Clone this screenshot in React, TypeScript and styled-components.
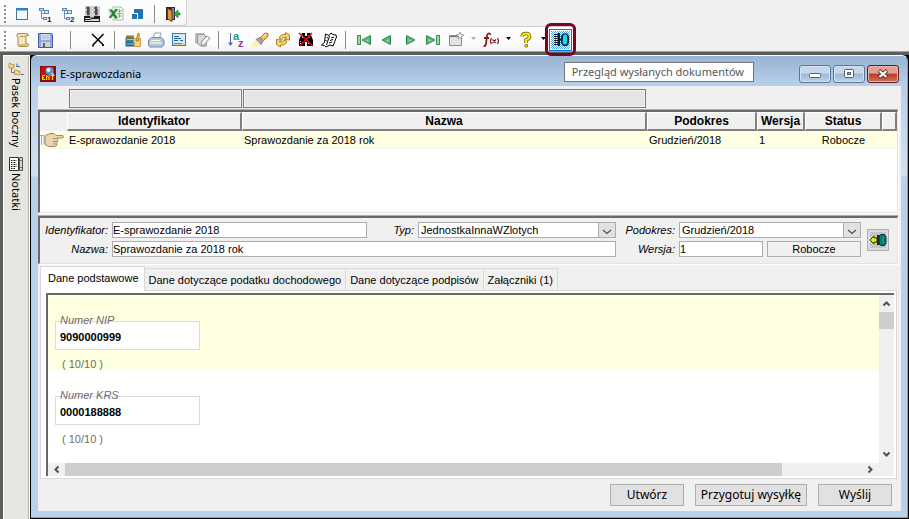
import React from "react";
import styled, { createGlobalStyle } from "styled-components";

const arial = `"Liberation Sans", Arial, sans-serif`;
const ui = `"Noto Sans", "Open Sans", sans-serif`;

const Global = createGlobalStyle`
  *, *::before, *::after { box-sizing: border-box; }
  html, body { margin: 0; height: 100%; }
  body { background: #f0f0f0; font: 11px/14px ${arial}; color: #000; overflow: hidden; }
  button, input, select { font: inherit; color: inherit; margin: 0; border-radius: 0; outline: none; }
  svg { overflow: visible; }
`;

const Page = styled.div`
  display: flex;
  flex-direction: column;
  height: 100vh;
`;

const Toolbar = styled.div`
  display: flex;
  align-items: center;
  align-self: flex-start;
  height: 26px;
  padding: 2px 2px 0 4px;
  background: linear-gradient(#fdfdfd, #fcfcfc 60%, #f3f3f3);
  border: solid #d0d0d0;
  border-width: 0 1px 1px 0;
  border-radius: 0 0 3px 0;
`;

const ToolbarWide = styled(Toolbar)`
  border-width: 1px 0 0 0;
  padding-top: 0;
  padding-right: 1px;
`;

const Grip = styled.span`
  width: 2px;
  height: 18px;
  margin-right: 5px;
  background: repeating-linear-gradient(#8c8c8c 0 2px, transparent 2px 4px);
`;

const ToolButton = styled.button`
  display: grid;
  place-items: center;
  width: 23px;
  height: 22px;
  padding: 0;
  border: 0;
  background: none;
`;

const DropButton = styled(ToolButton)`
  width: 12px;
`;

const Divider = styled.span<{ $wide?: boolean }>`
  width: 1px;
  height: 18px;
  margin: 0 ${(p) => (p.$wide ? "15px 0 13px" : "6px 0 5px")};
  background: #8a8a8a;
`;

const Highlight = styled.span`
  position: relative;
  display: flex;
  &::after {
    content: "";
    position: absolute;
    inset: -6px -4px -5px -4px;
    border: 3px solid #7d0420;
    border-radius: 6px;
    z-index: 3;
  }
`;

const ActiveTool = styled(ToolButton)`
  border: 1px solid #0078d7;
  background: repeating-conic-gradient(#ffffff 0 25%, #4fa4e8 0 50%) 0 0 / 2px 2px;
  box-shadow: inset 0 0 0 1px #f4faff;
`;

const Workspace = styled.div`
  display: flex;
  flex: 1;
  min-height: 0;
  border: solid #5d5d5d;
  border-width: 3px 0 0 3px;
  box-shadow: 0 -1px #a0a0a0;
  background: #000;
`;

const SideBar = styled.nav`
  display: flex;
  flex-direction: column;
  gap: 10px;
  width: 27px;
  padding: 6px 4px;
  background: #e6e5df;
  border: solid #fff;
  border-width: 1px 1px 0 1px;
  box-shadow: inset -1px 0 #b5b4ae;
`;

const SideButton = styled.button`
  display: flex;
  flex-direction: column;
  align-items: center;
  gap: 2px;
  width: 16px;
  padding: 0;
  border: 0;
  background: none;
  font: 11px/16px ${ui};
`;

const SideText = styled.span`
  writing-mode: vertical-rl;
  white-space: nowrap;
`;

const Window = styled.section`
  flex: 1;
  min-width: 0;
  display: flex;
  flex-direction: column;
  margin: 0 1px 1px 1px;
  padding: 0 6px 6px 7px;
  background: linear-gradient(#98b4d4 0, #b8d0ea 30px, #d3e1f1 120px, #b9d1ea 121px);
  border: solid #30c8d8;
  border-width: 0 1px 1px 0;
  border-top: 1px solid #fff;
  border-radius: 6px 6px 0 0;
`;

const TitleBar = styled.header`
  position: relative;
  display: flex;
  align-items: center;
  gap: 4px;
  height: 30px;
  padding: 6px 2px 0 2px;
`;

const Title = styled.h1`
  flex: 1;
  margin: 0;
  font: 11px/16px ${ui};
`;

const Tooltip = styled.div`
  position: absolute;
  top: 6px;
  right: 147px;
  padding: 0 9px 0 7px;
  border: 1px solid #767676;
  background: #fff;
  color: #575757;
  font: 11px/18px ${ui};
  white-space: nowrap;
`;

const WinButtons = styled.div`
  display: flex;
  gap: 2px;
`;

const WinButton = styled.button<{ $close?: boolean }>`
  display: grid;
  place-items: center;
  width: 32px;
  height: 18px;
  padding: 0;
  border: 1px solid ${(p) => (p.$close ? "#5b1c22" : "#5f7590")};
  border-radius: 3px;
  background: ${(p) =>
    p.$close
      ? "linear-gradient(#dea193 0 45%, #b93a22 50%, #d1725c)"
      : "linear-gradient(#c4d7ec 0 45%, #9fbad6 50%, #bad2ea)"};
  box-shadow: inset 0 0 0 1px ${(p) => (p.$close ? "#e7b5a8" : "#d3e3f4")};
`;

const Client = styled.main`
  flex: 1;
  min-height: 0;
  display: flex;
  flex-direction: column;
  padding-right: 3px;
  background: #f0f0f0;
`;

const FilterRow = styled.div`
  display: grid;
  grid-template-columns: 173px minmax(0, 1fr);
  gap: 1px;
  padding: 3px 252px 2px 31px;
`;

const FilterInput = styled.input`
  width: 100%;
  height: 19px;
  padding: 0 3px;
  border: 1px solid #7a7a7a;
  background: #e5e5e5;
  box-shadow: inset 0 0 0 1px #f3f3f3;
`;

const Sunken = styled.div`
  border: solid;
  border-width: 2px 1px 1px 2px;
  border-color: #696969 #e3e3e3 #e3e3e3 #696969;
  box-shadow: 1px 1px #fff, 0 -1px #b0b0b0;
`;

const GridBox = styled(Sunken)`
  height: 103px;
  background: #fff;
`;

const GridTable = styled.table`
  width: 100%;
  table-layout: fixed;
  border-collapse: separate;
  border-spacing: 0;
  background: #f0f0f0;
`;

const Col = styled.col<{ $w?: number }>`
  width: ${(p) => (p.$w ? `${p.$w}px` : "auto")};
`;

const Th = styled.th`
  height: 19px;
  padding: 0;
  border: solid;
  border-width: 1px 2px 2px 1px;
  border-color: #fff #808080 #808080 #fff;
  background: #f0f0f0;
  font: bold 12px/14px ${arial};
  &:first-child { border-color: #f0f0f0; }
`;

const Td = styled.td<{ $center?: boolean }>`
  height: 18px;
  padding: 0 2px 0 ${(p) => (p.$center ? 2 : 2)}px;
  border-bottom: 1px solid #f5f5e6;
  background: #ffffe1;
  text-align: ${(p) => (p.$center ? "center" : "left")};
  white-space: nowrap;
  &:first-child { padding: 0; }
  svg { display: block; }
`;

const FormPanel = styled(Sunken)`
  display: grid;
  grid-template-columns: 72px minmax(0, 1fr) 63px 182px 28px;
  grid-template-rows: 16px 16px;
  row-gap: 3px;
  margin-top: 3px;
  padding: 4px 8px 6px 0;
`;

const Label = styled.label<{ $w?: number }>`
  width: ${(p) => (p.$w ? `${p.$w}px` : "auto")};
  padding-right: 4px;
  text-align: right;
  font-style: italic;
  line-height: 17px;
  white-space: nowrap;
`;

const Split = styled.div<{ $gap?: number }>`
  display: flex;
  gap: ${(p) => p.$gap || 0}px;
`;

const Input = styled.input<{ $grow?: number }>`
  flex: ${(p) => p.$grow || 1} 1 0;
  min-width: 0;
  width: 100%;
  height: 16px;
  padding: 0;
  border: 1px solid #abadb3;
  background: #fff;
`;

const SelectWrap = styled.span<{ $grow?: number }>`
  flex: ${(p) => p.$grow || 1} 1 0;
  position: relative;
  display: flex;
  min-width: 0;
  svg {
    position: absolute;
    right: 0;
    top: 0;
    pointer-events: none;
  }
`;

const Select = styled.select`
  width: 100%;
  height: 16px;
  padding: 0 20px 0 2px;
  border: 1px solid #abadb3;
  background: #fff;
  appearance: none;
  line-height: 14px;
`;

const StatusBox = styled.output`
  flex: 92 1 0;
  height: 16px;
  border: 1px solid #abadb3;
  text-align: center;
  line-height: 15px;
`;

const FormButton = styled.button`
  grid-column: 5;
  grid-row: 1 / 3;
  align-self: center;
  justify-self: end;
  width: 22px;
  height: 22px;
  padding: 0;
  display: grid;
  place-items: center;
  border: 1px solid #adadad;
  background: #c4c4c4;
  box-shadow: inset 0 0 0 2px #dcdcdc;
`;

const Tabs = styled.div`
  display: flex;
  align-items: flex-end;
  height: 24px;
  margin: 2px 0 0 2px;
`;

const Tab = styled.button<{ $active?: boolean }>`
  position: relative;
  height: ${(p) => (p.$active ? 25 : 22)}px;
  margin-bottom: ${(p) => (p.$active ? -1 : 0)}px;
  padding: 0 ${(p) => (p.$active ? "5px 3px 7px" : "4px 0 4px")};
  border: 1px solid #d9d9d9;
  border-bottom: 0;
  border-left-width: ${(p) => (p.$active ? 1 : 0)}px;
  background: ${(p) => (p.$active ? "#fff" : "#f0f0f0")};
  line-height: 20px;
  white-space: nowrap;
`;

const TabPane = styled.div`
  flex: 1;
  min-height: 0;
  display: flex;
  margin: 0 1px 0 2px;
  padding: 2px 2px 2px 5px;
  border: 1px solid #d9d9d9;
  background: #fff;
`;

const Scroller = styled(Sunken)`
  flex: 1;
  min-width: 0;
  display: grid;
  grid-template-columns: minmax(0, 1fr) 15px;
  grid-template-rows: minmax(0, 1fr) 13px;
  border-width: 2px 0 0 2px;
  box-shadow: none;
  background: #f0f0f0;
`;

const Fields = styled.div`
  overflow: hidden;
  background: #fff;
`;

const FieldBand = styled.div<{ $tint?: boolean }>`
  height: 75px;
  padding: 26px 7px 0;
  background: ${(p) => (p.$tint ? "#ffffe1" : "#fff")};
`;

const FieldBox = styled.div`
  position: relative;
  width: 145px;
  height: 29px;
  border: 1px solid #dcdcdc;
  background: #fff;
`;

const FieldLabel = styled.label`
  position: absolute;
  top: -9px;
  left: 4px;
  color: #6d6d6d;
  font-style: italic;
`;

const FieldInput = styled.input`
  width: 100%;
  height: 27px;
  padding: 3px 4px 0;
  border: 0;
  background: none;
  font-weight: bold;
`;

const Counter = styled.div`
  padding: 7px 7px 0;
  color: #6d6d6d;
`;

const ScrollBar = styled.div<{ $vertical?: boolean }>`
  display: flex;
  flex-direction: ${(p) => (p.$vertical ? "column" : "row")};
  min-width: 0;
  min-height: 0;
`;

const ScrollButton = styled.button`
  flex: 0 0 17px;
  display: grid;
  place-items: center;
  padding: 0;
  border: 0;
  background: none;
`;

const Track = styled.div`
  flex: 1;
  min-width: 0;
`;

const Thumb = styled.div<{ $vertical?: boolean }>`
  width: ${(p) => (p.$vertical ? "100%" : "90%")};
  height: ${(p) => (p.$vertical ? "13%" : "100%")};
  background: #cdcdcd;
`;

const Actions = styled.footer`
  display: flex;
  justify-content: flex-end;
  gap: 11px;
  padding: 5px 6px 5px 0;
`;

const ActionButton = styled.button<{ $wide?: boolean }>`
  width: ${(p) => (p.$wide ? 112 : 74)}px;
  height: 22px;
  padding: 0;
  border: 1px solid #adadad;
  background: #e1e1e1;
  font: 12px/18px ${ui};
  white-space: nowrap;
`;

const Svg = ({ w = 18, h = 18, children }: { w?: number; h?: number; children: React.ReactNode }) => (
  <svg width={w} height={h} viewBox={`0 0 ${w} ${h}`} fill="none" aria-hidden="true">
    {children}
  </svg>
);

const FormIcon = () => (
  <Svg>
    <rect x="2.5" y="3.500" width="11" height="11" fill="#f4f9fe" stroke="#3d78a8" />
    <path d="M2 3h12v2.500H2z" fill="#2a83c9" />
  </Svg>
);
const TreeIcon = ({ n }: { n: number }) => (
  <Svg>
    <path d="M4.500 5v8.500M4.500 8.500H8M4.500 13.500H8" stroke="#6d92b5" />
    <rect x="2.500" y="3.500" width="4" height="2" fill="#dce9f5" stroke="#5888b2" />
    <rect x="7.500" y="5.500" width="4" height="3" fill="#dce9f5" stroke="#5888b2" />
    <rect x="6.500" y="12.500" width="3" height="2" fill="#dce9f5" stroke="#5888b2" />
    <text x="10" y="17" fontSize="8" fontWeight="bold" fontFamily="Liberation Sans" fill="#10107c">{n}</text>
  </Svg>
);
const ArchiveIcon = () => (
  <Svg>
    <path d="M2 1h15v16H2z" fill="#cfcfcf" />
    <path d="M3 3h4M4 5h3M3 7h4M4 9h3M11 3h3M12 5h3M11 7h4M12 9h3" stroke="#222" />
    <path d="M5 1.500v9M13 1.500v9" stroke="#222" />
    <path d="M1 11h6v1.500h4V11h6v6H1z" fill="#1c1c1c" />
    <path d="M2 13.500h5l2 1h7M2 15.500h14" stroke="#d8d8d8" />
  </Svg>
);
const ExcelIcon = () => (
  <Svg>
    <path d="M7 2h8l2 2v11H7z" fill="#fff" stroke="#9db89e" />
    <path d="M11 6h5M11 8.500h5M11 11h5M13.500 4v9" stroke="#75b178" />
    <path d="M1.500 4L11 2.500v12L3.500 13.500z" fill="#d8ecd6" />
    <path d="M3 4.500h3l1.500 2 2-2.500H12L8.800 8.500 12 13.500H9L7.200 10.500 5 13H2.500L6 8.500z" fill="#2d7d35" />
  </Svg>
);
const BlocksIcon = () => (
  <Svg>
    <path d="M5 4h9v10H5z" fill="#2672ad" />
    <path d="M2 8h7v6H2z" fill="#fff" />
    <path d="M3 9h5v5H3z" fill="#2672ad" />
  </Svg>
);
const ExitIcon = () => (
  <Svg>
    <path d="M2 2h9v13H2z" fill="#3a2418" />
    <path d="M8 3h2v11H8z" fill="#5d8fd0" />
    <path d="M3.500 3.500L8 5.500v11L3.500 14z" fill="#e0963a" stroke="#6b3414" />
    <path d="M16 8h-2V5l-4 4 4 4v-3h2z" fill="#2fae33" stroke="#157a1c" strokeWidth=".6" />
  </Svg>
);
const ScrollIcon = () => (
  <Svg>
    <path d="M3.500 2.500h9q2 0 2 2H12v8h1.500q1 0 1 1.500 0 1.500-2 1.500h-7q-1.500 0-1.500-1.500V6H3.500q-1.500-2 0-3.500z" fill="#f0e0b4" stroke="#a88d4c" />
    <path d="M6 5.500h5M5.500 14h7" stroke="#b79c5d" />
    <path d="M7 7v6M9.500 7v6" stroke="#fbf3d8" />
  </Svg>
);
const SaveIcon = () => (
  <Svg>
    <path d="M1.500 2.500h13l1 1v13h-14z" fill="#8fa8e0" stroke="#46599a" />
    <path d="M4 3h9v6H4z" fill="#cfdcf3" />
    <path d="M5 5h7M5 7h7" stroke="#a8bbdd" />
    <path d="M4 11h9v5H4z" fill="#d3d3c4" />
    <path d="M6 12h2v4H6z" fill="#4a5d9c" />
  </Svg>
);
const DeleteIcon = () => (
  <Svg>
    <path d="M3 3l11.500 11M14.500 3L3.500 14.500" stroke="#000" strokeWidth="1.500" />
    <path d="M3 15h2M13 14.500h2" stroke="#000" />
  </Svg>
);
const BooksIcon = () => (
  <Svg>
    <path d="M2 4.500h8v2.500H2z" fill="#c2602c" />
    <path d="M1.500 7h9v4h-9z" fill="#2e8a80" />
    <path d="M3 8.500h7" stroke="#9ad4c4" />
    <path d="M1.500 11h9v4.500h-9z" fill="#315f8e" />
    <path d="M2.500 13h8" stroke="#a9c5df" />
    <path d="M9.500 7.500h7v8h-6z" fill="#f3d48c" stroke="#c79845" />
    <path d="M12 10l2-8 1.500 1-1 7z" fill="#f6bd48" stroke="#8a6222" strokeWidth=".7" />
  </Svg>
);
const PrintIcon = () => (
  <Svg>
    <path d="M6 7l2-5h6l-1.500 5z" fill="#fff" stroke="#89a0b8" />
    <path d="M1.500 9l3-2.500h10L17 9v5l-2 2H3l-1.500-2z" fill="#b5c7dc" stroke="#7089a8" />
    <path d="M3.500 12h11" stroke="#f3e6ac" strokeWidth="2" />
    <path d="M4 9.500h9" stroke="#eef4fa" />
  </Svg>
);
const CardIcon = () => (
  <Svg>
    <rect x="2.500" y="2.500" width="13" height="12" fill="#d7e9f8" stroke="#3779b0" />
    <path d="M4 5.500h5M4 7.500h7M4 9.500h4M10 9.500h3" stroke="#2a6499" />
    <path d="M3 12h12v2H3z" fill="#e9d99a" />
    <path d="M4 12.500h8" stroke="#63904d" />
  </Svg>
);
const PagesIcon = () => (
  <Svg>
    <path d="M2 2h9l2 3v9l-3 2-8-4z" fill="#bcbcbc" />
    <path d="M4.500 3.500h6l3 3v8.500h-6l-3-3z" fill="#d9d9d9" stroke="#999" />
    <path d="M8 13l1-3 5-5 3 2-5 6-3 2z" fill="#f2f2f2" stroke="#8f8f8f" />
  </Svg>
);
const SortIcon = () => (
  <Svg>
    <path d="M2.500 2v12" stroke="#4a6c94" />
    <path d="M0 11.500h5L2.500 15z" fill="#4a6c94" />
    <text x="5" y="9" fontSize="11" fontWeight="bold" fontFamily="Liberation Sans" fill="#2c9184">a</text>
    <text x="10" y="16" fontSize="11" fontWeight="bold" fontFamily="Liberation Sans" fill="#8a3c9c">z</text>
  </Svg>
);
const TorchIcon = () => (
  <Svg>
    <path d="M9 7l5-5 3 .5v3L11 11z" fill="#f2bb66" stroke="#a9702f" />
    <path d="M12 6l3-3" stroke="#fbe0a6" strokeWidth="1.500" />
    <path d="M5 8.500l4-2 3 3-2 4z" fill="#a8a3a8" stroke="#827c84" />
    <path d="M5 9l4 4-5 3-3 .5L2 12z" fill="#ffec9a" />
    <path d="M2 15l4-3" stroke="#fff" />
  </Svg>
);
const RefreshIcon = () => (
  <Svg>
    <path d="M5.500 7.500Q5.500 3 11.500 3.500V1.500l4 2.500v5l-5-.5 2-2q-4-1-4.500 2z" fill="#f6d96c" stroke="#ad7d1e" />
    <path d="M12.500 10q0 4.500-6 4v2l-4-2.500v-5l5 .5-2 2q4 1 4.500-2z" fill="#f6d96c" stroke="#ad7d1e" />
  </Svg>
);
const NoFindIcon = () => (
  <Svg>
    <path d="M5 2h3v3h2V2h3l3 7v6h-6v-4H8v4H2V9z" fill="#000" />
    <path d="M5.500 4v4M12 4v4M3.500 10v3M11.500 10v3" stroke="#fff" strokeDasharray="1 1" />
    <path d="M2 2l14 13M15 2L3 15" stroke="#e01010" strokeWidth="1.500" />
  </Svg>
);
const NotesIcon = () => (
  <Svg>
    <path d="M5.500 3l3.500 1.500L11 2l2 1.500L16 4l.5 2L13 15l-3-1-4 2-1.500-1.500L1.500 14l3-2.500z" fill="#fff" stroke="#000" />
    <path d="M9.500 5L6.500 14M6.500 6.500l1.500.5M5.500 9.500l1.500.5M11 7l3-1M10 9.500l3-1M9 12l3-1" stroke="#000" />
  </Svg>
);
const NavIcon = ({ flip, bar }: { flip?: boolean; bar?: boolean }) => (
  <Svg>
    <g transform={flip ? "matrix(-1 0 0 1 18 0)" : undefined}>
      {bar && <rect x="2.500" y="4.500" width="3" height="9" fill="#a4d795" stroke="#3c9164" />}
      <g transform={bar ? undefined : "translate(-3 0)"}>
        <path d="M15.500 4.500v9L7 9z" fill="#5cb078" stroke="#2f8a58" />
        <path d="M13.500 8v3L10 9.500z" fill="#95d49a" />
      </g>
    </g>
  </Svg>
);
const NewWindowIcon = () => (
  <Svg>
    <path d="M2.500 4.500h12v10h-12z" fill="#dcdcdc" stroke="#8b8b8b" />
    <path d="M3 5.500h9" stroke="#777" />
    <path d="M3 7h11v7H3z" fill="#e4e4e4" />
    <path d="M13 1l1 2.500 3 .5-2.500 1.500.5 2.500-2-1.500-2 1.500.5-2.500L9 4l3-.5z" fill="#f2f2f2" stroke="#8b8b8b" strokeWidth=".8" />
  </Svg>
);
const CaretIcon = ({ color = "#000" }: { color?: string }) => (
  <Svg w={5} h={5}>
    <path d="M0 0h5L2.500 3z" fill={color} />
  </Svg>
);
const FxIcon = () => (
  <Svg>
    <path d="M8.500 4Q8 2 6.500 2.500 5 3 4.800 6L4 13q-.5 2.500-2.500 2M2 7h5" stroke="#8b1a1a" strokeWidth="1.800" />
    <path d="M9.500 7q-2 3 0 6M15.500 7q2 3 0 6M10.500 8.500l3.500 3.500M14 8.500L10.500 12" stroke="#8b1a1a" strokeWidth="1.200" />
  </Svg>
);
const HelpIcon = () => (
  <Svg>
    <path d="M5 5.500Q5.500 2.500 9 2.500t3.500 3Q12.500 8 9 9v3" stroke="#55531a" strokeWidth="3.400" />
    <path d="M5 5.500Q5.500 2.500 9 2.500t3.500 3Q12.500 8 9 9v3" stroke="#ffee00" strokeWidth="2" />
    <path d="M8 13.500h2.500V16H8z" fill="#ffee00" stroke="#55531a" strokeWidth=".7" />
  </Svg>
);
const SentIcon = () => (
  <Svg>
    <path d="M2 3.500h5M2 5.500h5M2 7.500h5M2 9.500h5M2 11.500h5M2 13.500h5" stroke="#0b1c2c" strokeWidth="1.200" />
    <path d="M7 2v13M7 8.500h4" stroke="#0b1c2c" strokeWidth="2" />
    <path d="M9 5l2-2.500h4L17 5v7l-2 3h-4l-2-3z" fill="#0b1c2c" />
    <path d="M11 5l1-1.500h2L15 5v7l-1 1.500h-2L10.500 12z" fill="#22d8f0" />
  </Svg>
);
const AppIcon = () => (
  <Svg w={16} h={16}>
    <path d="M0 0h16v16H0z" fill="#8e0808" />
    <path d="M1 1h13v13H1z" fill="#c31111" />
    <circle cx="9.500" cy="5" r="4" fill="#5a94c8" />
    <circle cx="8.500" cy="4" r="2" fill="#e4f1fb" />
    <path d="M12 7l2 3" stroke="#d8d8d8" strokeWidth="1.500" />
    <path d="M5 9.500H2.500v4H5M2.500 11.500H4M6.500 14V9.500L9 12V9.500M9 12v2M10.500 9.500H14M12.500 9.500V14" stroke="#ffe800" />
  </Svg>
);
const HandIcon = () => (
  <Svg w={26} h={14}>
    <path d="M0 3h4v9H0z" fill="#fff" />
    <path d="M0 2.500h4v9M1.500 3v9" stroke="#86aed6" />
    <path d="M5 3q3-2.500 6-2.500h3l2 2h6q1.500 0 1.500 1.200T22 5h-5l1 1.500-1 1.500.5 1.500-1 1 .5 1.500-1.500 1.500H9l-4-2z" fill="#ecd5ae" stroke="#a48862" />
    <path d="M13 5.500h4M13 8.500h4M13 11h3" stroke="#a48862" />
  </Svg>
);
const FolderTreeIcon = () => (
  <Svg w={16} h={14}>
    <path d="M3.500 6v4.500H7" stroke="#4f7ea8" />
    <path d="M1 1.500h2l.5 1H6V6H1zM6.500 8h2l.5 1h3v3.500H6.500z" fill="#f6d68c" stroke="#b98a38" strokeWidth=".8" />
    <path d="M8 4.500h4M13 12.500h3M9 1.500v3" stroke="#3f7aae" />
  </Svg>
);
const NoteIcon = () => (
  <Svg w={14} h={14}>
    <path d="M.5.500h9v13h-9z" fill="#fff" stroke="#333" />
    <path d="M10.500.500h3v13h-3z" fill="#d7d9b4" stroke="#555" />
    <path d="M2 3.500h6M2 5.500h5M2 7.500h6M2 9.500h6M2 11.500h4" stroke="#111" strokeDasharray="1 .5" />
    <path d="M12 3v1M12 10v1" stroke="#111" />
  </Svg>
);
const ConnectIcon = () => (
  <Svg w={18} h={14}>
    <path d="M1 7l4-4v2h3v4H5v2z" fill="#f4f000" stroke="#333300" />
    <path d="M8 2h2v10H8z" fill="#222" />
    <path d="M10 3l2-1.500h3.500L17 4v6l-1.500 2.500H12L10 11z" fill="#0c7a78" stroke="#042f2f" />
    <path d="M14.500 4q-2 3 0 6" stroke="#2c9c98" />
  </Svg>
);
const ComboArrow = () => (
  <Svg w={18} h={16}>
    <rect x=".5" y=".5" width="17" height="15" fill="#e1e1e1" stroke="#adadad" />
    <path d="M5 8l4 3.500L13 8" stroke="#505050" strokeWidth="1.300" />
  </Svg>
);
const Chevron = ({ turn = 0 }: { turn?: number }) => (
  <Svg w={9} h={9}>
    <path d="M1.500 2.500l3 3 3-3" stroke="#505050" strokeWidth="2" transform={`rotate(${turn} 4.500 4.500)`} />
  </Svg>
);

const Tool = ({ label, children }: { label: string; children: React.ReactNode }) => (
  <ToolButton aria-label={label}>{children}</ToolButton>
);

const Field = ({ id, label, value, tint }: { id: string; label: string; value: string; tint?: boolean }) => (
  <FieldBand $tint={tint}>
    <FieldBox>
      <FieldInput id={id} defaultValue={value} />
      <FieldLabel htmlFor={id}>{label}</FieldLabel>
    </FieldBox>
    <Counter>( 10/10 )</Counter>
  </FieldBand>
);

export default function App() {
  return (
    <Page>
      <Global />
      <Toolbar role="toolbar">
        <Grip />
        <Tool label="Okno"><FormIcon /></Tool>
        <Tool label="Drzewo 1"><TreeIcon n={1} /></Tool>
        <Tool label="Drzewo 2"><TreeIcon n={2} /></Tool>
        <Tool label="Archiwum"><ArchiveIcon /></Tool>
        <Tool label="Excel"><ExcelIcon /></Tool>
        <Tool label="Układ"><BlocksIcon /></Tool>
        <Divider />
        <Tool label="Wyjście"><ExitIcon /></Tool>
      </Toolbar>
      <ToolbarWide role="toolbar">
        <Grip />
        <Tool label="Otwórz"><ScrollIcon /></Tool>
        <Tool label="Zapisz"><SaveIcon /></Tool>
        <Divider $wide />
        <Tool label="Usuń"><DeleteIcon /></Tool>
        <Divider />
        <Tool label="Katalog"><BooksIcon /></Tool>
        <Tool label="Drukuj"><PrintIcon /></Tool>
        <Tool label="Formularz"><CardIcon /></Tool>
        <Tool label="Kopiuj"><PagesIcon /></Tool>
        <Divider />
        <Tool label="Sortuj"><SortIcon /></Tool>
        <Tool label="Szukaj"><TorchIcon /></Tool>
        <Tool label="Odśwież"><RefreshIcon /></Tool>
        <Tool label="Wyczyść szukanie"><NoFindIcon /></Tool>
        <Tool label="Notatka"><NotesIcon /></Tool>
        <Divider />
        <Tool label="Pierwszy"><NavIcon bar /></Tool>
        <Tool label="Poprzedni"><NavIcon /></Tool>
        <Tool label="Następny"><NavIcon flip /></Tool>
        <Tool label="Ostatni"><NavIcon flip bar /></Tool>
        <Tool label="Nowe okno"><NewWindowIcon /></Tool>
        <DropButton aria-label="Więcej okien"><CaretIcon color="#b0b0b0" /></DropButton>
        <Tool label="Funkcje"><FxIcon /></Tool>
        <DropButton aria-label="Więcej funkcji"><CaretIcon /></DropButton>
        <Tool label="Pomoc"><HelpIcon /></Tool>
        <DropButton aria-label="Więcej pomocy"><CaretIcon /></DropButton>
        <Highlight>
          <ActiveTool aria-label="Przegląd wysłanych dokumentów"><SentIcon /></ActiveTool>
        </Highlight>
      </ToolbarWide>

      <Workspace>
        <SideBar>
          <SideButton><FolderTreeIcon /><SideText>Pasek boczny</SideText></SideButton>
          <SideButton><NoteIcon /><SideText>Notatki</SideText></SideButton>
        </SideBar>

        <Window>
          <TitleBar>
            <AppIcon />
            <Title>E-sprawozdania</Title>
            <Tooltip role="tooltip">Przegląd wysłanych dokumentów</Tooltip>
            <WinButtons>
              <WinButton aria-label="Minimalizuj">
                <Svg w={12} h={8}><rect x=".5" y="3.500" width="11" height="4" rx="1" fill="#fff" stroke="#51606f" /></Svg>
              </WinButton>
              <WinButton aria-label="Maksymalizuj">
                <Svg w={12} h={10}>
                  <rect x="1.500" y=".5" width="9" height="8" rx="1" fill="#fff" stroke="#51606f" />
                  <rect x="4.500" y="3.500" width="3" height="2" fill="#9fbad6" stroke="#51606f" />
                </Svg>
              </WinButton>
              <WinButton $close aria-label="Zamknij">
                <Svg w={12} h={10}>
                  <path d="M2 1.500l8 7M10 1.500l-8 7" stroke="#5c3030" strokeWidth="3.800" />
                  <path d="M2.500 2l7 6M9.500 2l-7 6" stroke="#fff" strokeWidth="2.200" />
                </Svg>
              </WinButton>
            </WinButtons>
          </TitleBar>

          <Client>
            <FilterRow>
              <FilterInput aria-label="Filtr: Identyfikator" />
              <FilterInput aria-label="Filtr: Nazwa" />
            </FilterRow>

            <GridBox>
              <GridTable>
                <colgroup>
                  <Col $w={27} />
                  <Col $w={175} />
                  <Col />
                  <Col $w={110} />
                  <Col $w={48} />
                  <Col $w={77} />
                  <Col $w={15} />
                </colgroup>
                <thead>
                  <tr>
                    <Th /><Th>Identyfikator</Th><Th>Nazwa</Th><Th>Podokres</Th><Th>Wersja</Th><Th>Status</Th><Th />
                  </tr>
                </thead>
                <tbody>
                  <tr>
                    <Td><HandIcon /></Td>
                    <Td>E-sprawozdanie 2018</Td>
                    <Td>Sprawozdanie za 2018 rok</Td>
                    <Td>Grudzień/2018</Td>
                    <Td>1</Td>
                    <Td $center>Robocze</Td>
                    <Td />
                  </tr>
                </tbody>
              </GridTable>
            </GridBox>

            <FormPanel>
              <Label htmlFor="ident">Identyfikator:</Label>
              <Split>
                <Input id="ident" $grow={253} defaultValue="E-sprawozdanie 2018" />
                <Label htmlFor="type" $w={51}>Typ:</Label>
                <SelectWrap $grow={198}>
                  <Select id="type"><option>JednostkaInnaWZlotych</option></Select>
                  <ComboArrow />
                </SelectWrap>
              </Split>
              <Label htmlFor="period">Podokres:</Label>
              <SelectWrap>
                <Select id="period"><option>Grudzień/2018</option></Select>
                <ComboArrow />
              </SelectWrap>
              <FormButton aria-label="Połącz"><ConnectIcon /></FormButton>
              <Label htmlFor="name">Nazwa:</Label>
              <Input id="name" defaultValue="Sprawozdanie za 2018 rok" />
              <Label htmlFor="version">Wersja:</Label>
              <Split $gap={4}>
                <Input id="version" $grow={82} defaultValue="1" />
                <StatusBox>Robocze</StatusBox>
              </Split>
            </FormPanel>

            <Tabs role="tablist">
              <Tab role="tab" aria-selected $active>Dane podstawowe</Tab>
              <Tab role="tab">Dane dotyczące podatku dochodowego</Tab>
              <Tab role="tab">Dane dotyczące podpisów</Tab>
              <Tab role="tab">Załączniki (1)</Tab>
            </Tabs>
            <TabPane role="tabpanel">
              <Scroller>
                <Fields>
                  <Field id="nip" label="Numer NIP" value="9090000999" tint />
                  <Field id="krs" label="Numer KRS" value="0000188888" />
                </Fields>
                <ScrollBar $vertical>
                  <ScrollButton aria-label="W górę"><Chevron turn={180} /></ScrollButton>
                  <Track><Thumb $vertical /></Track>
                  <ScrollButton aria-label="W dół"><Chevron /></ScrollButton>
                </ScrollBar>
                <ScrollBar>
                  <ScrollButton aria-label="W lewo"><Chevron turn={90} /></ScrollButton>
                  <Track><Thumb /></Track>
                  <ScrollButton aria-label="W prawo"><Chevron turn={-90} /></ScrollButton>
                </ScrollBar>
              </Scroller>
            </TabPane>

            <Actions>
              <ActionButton>Utwórz</ActionButton>
              <ActionButton $wide>Przygotuj wysyłkę</ActionButton>
              <ActionButton>Wyślij</ActionButton>
            </Actions>
          </Client>
        </Window>
      </Workspace>
    </Page>
  );
}
